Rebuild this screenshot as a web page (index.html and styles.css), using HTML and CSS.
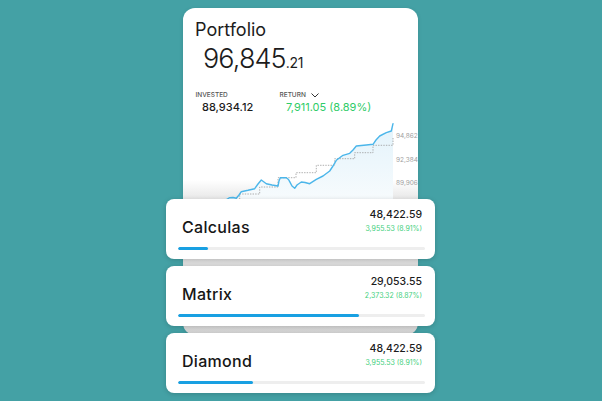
FILE: index.html
```html
<!DOCTYPE html>
<html>
<head>
<meta charset="utf-8">
<link rel="stylesheet" href="styles.css">
</head>
<body>
<div class="stage">
  <div class="phone">
    <div class="title">Portfolio</div>
    <div class="total">96,845<span class="cents">.21</span></div>
    <div class="stats">
      <div class="stat stat-invested">
        <div class="label">INVESTED</div>
        <div class="value">88,934.12</div>
      </div>
      <div class="stat">
        <div class="label">RETURN <svg class="chev" width="8" height="5" viewBox="0 0 8 5"><polyline points="0.5,0.5 4,4 7.5,0.5" fill="none" stroke="#333" stroke-width="1"/></svg></div>
        <div class="value gain">7,911.05 (8.89%)</div>
      </div>
    </div>
    <svg class="chart" width="235" height="86" viewBox="183 114 235 86">
      <defs>
        <linearGradient id="fillg" x1="0" y1="0" x2="0" y2="1">
          <stop offset="0" stop-color="#e3f3fb"/>
          <stop offset="1" stop-color="#f7fbfd"/>
        </linearGradient>
      </defs>
      <polygon fill="url(#fillg)" points="225.7,199 229.7,196.7 236.3,197.3 241.3,190.7 248,189.3 254.7,187.7 258,183 261.3,179 266.3,182.7 272,184 278,185 280.3,176.7 286.3,176.7 289.7,180.7 294.7,187.3 301.3,181 309.7,182.7 316.3,178.3 323,175 329.7,170 336.3,159.3 343,154.3 349.7,152.3 356.3,145 366.3,144 373,143.3 379.7,135 386.3,131.7 391.3,130 393,122.7 393,200 225.7,200"/>
      <polyline fill="none" stroke="#9a9a9a" stroke-width="0.8" stroke-dasharray="1.4 1.2" points="239.7,198.3 239.7,193 259.7,193 259.7,186 278,186 278,176.7 296,176.7 296,171.7 316.3,171.7 316.3,164.3 334.7,164.3 334.7,157.7 354.7,157.7 354.7,151.7 373,151.7 373,144.3 393,144.3 393,136.7"/>
      <polyline fill="none" stroke="#4bb6ea" stroke-width="1.4" stroke-linejoin="round" stroke-linecap="round" points="225.7,199 229.7,196.7 233,196.5 236.3,197.3 239,194 241.3,190.7 248,189.3 254.7,187.7 258,183 261.3,179 264,181 266.3,182.7 272,184 278,185 279,180 280.3,176.7 286.3,176.7 288.5,178.5 289.7,180.7 292,185 294.7,187.3 297,184 301.3,181 305,181.5 309.7,182.7 316.3,178.3 323,175 329.7,170 333,165 336.3,159.3 343,154.3 349.7,152.3 353,149 356.3,145 366.3,144 373,143.3 376,139 379.7,135 386.3,131.7 391.3,130 393,122.7"/>
      <text x="396" y="137" class="axis">94,862</text>
      <text x="396" y="160.5" class="axis">92,384</text>
      <text x="396" y="184" class="axis">89,906</text>
    </svg>
  </div>
  <div class="cards">
    <div class="card">
      <div class="card-top">
        <div class="name">Calculas</div>
        <div class="amounts">
          <div class="amount">48,422.59</div>
          <div class="change">3,955.53 (8.91%)</div>
        </div>
      </div>
      <div class="bar"><div class="fill" style="width: 12%"></div></div>
    </div>
    <div class="card">
      <div class="card-top">
        <div class="name">Matrix</div>
        <div class="amounts">
          <div class="amount">29,053.55</div>
          <div class="change">2,373.32 (8.87%)</div>
        </div>
      </div>
      <div class="bar"><div class="fill" style="width: 73.4%"></div></div>
    </div>
    <div class="card">
      <div class="card-top">
        <div class="name">Diamond</div>
        <div class="amounts">
          <div class="amount">48,422.59</div>
          <div class="change">3,955.53 (8.91%)</div>
        </div>
      </div>
      <div class="bar"><div class="fill" style="width: 30.2%"></div></div>
    </div>
  </div>
</div>
</body>
</html>
```

FILE: styles.css
```css
html, body {
  margin: 0;
  padding: 0;
}
body {
  background: #44a1a5;
  font-family: Inter, "Noto Sans", "DejaVu Sans", sans-serif;
  color: #1a1a1a;
}
.stage {
  width: 602px;
  height: 401px;
  overflow: hidden;
  padding-top: 8px;
  box-sizing: border-box;
}
.phone {
  margin-left: 183px;
  width: 235px;
  height: 327px;
  box-sizing: border-box;
  padding-top: 11px;
  border-radius: 12px;
  background: linear-gradient(to bottom, #ffffff 0, #ffffff 172px, #e9e9e9 190px, #dcdcdc 260px, #d6d6d6 327px);
  box-shadow: 0 1px 4px rgba(0,0,0,0.12);
}
.title {
  font-size: 18px;
  line-height: 22px;
  font-weight: 400;
  padding-left: 12px;
  color: #1c1c1c;
}
.total {
  margin-top: 2px;
  padding-left: 20px;
  font-size: 27px;
  line-height: 32px;
  font-weight: 300;
  color: #1c1c1c;
  letter-spacing: -0.9px;
}
.cents {
  font-size: 14px;
  font-weight: 400;
  letter-spacing: -0.2px;
}
.stats {
  display: flex;
  margin-top: 12px;
  padding-left: 12.5px;
}
.stat-invested {
  width: 84px;
}
.label {
  font-size: 6.5px;
  line-height: 8px;
  color: #555;
  font-weight: 500;
  display: flex;
  align-items: center;
  gap: 3px;
}
.chev {
  display: block;
  margin-left: 2px;
}
.value {
  margin-top: 2.3px;
  padding-left: 6.5px;
  font-size: 11px;
  line-height: 13px;
  font-weight: 500;
  color: #1c1c1c;
}
.value.gain {
  color: #2fcc68;
  font-weight: 400;
}
.chart {
  display: block;
  margin-top: 0.7px;
}
.axis {
  font-family: Inter, "Noto Sans", sans-serif;
  font-size: 6.5px;
  fill: #a0a0a0;
}
.cards {
  margin-top: -136px;
  margin-left: 166px;
  width: 269px;
  display: flex;
  flex-direction: column;
  gap: 7px;
}
.card {
  height: 60px;
  box-sizing: border-box;
  background: #fff;
  border-radius: 8px;
  padding: 10px 10px 0 12px;
  box-shadow: 0 1px 5px rgba(0,0,0,0.18);
}
.card-top {
  display: flex;
  justify-content: space-between;
  align-items: flex-start;
  height: 36px;
}
.name {
  margin-top: 8px;
  margin-left: 4px;
  font-size: 16px;
  line-height: 20px;
  font-weight: 500;
  color: #161616;
  letter-spacing: 0.3px;
}
.amounts {
  margin-right: 3px;
  text-align: right;
}
.amount {
  font-size: 10.5px;
  line-height: 12px;
  font-weight: 500;
  color: #1c1c1c;
}
.change {
  margin-top: 2px;
  font-size: 7px;
  line-height: 12px;
  color: #3fcf7d;
}
.bar {
  margin-top: 2px;
  height: 2.5px;
  background: #eeeeee;
  border-radius: 2px;
  overflow: hidden;
}
.fill {
  height: 100%;
  background: #18a0e2;
  border-radius: 2px;
}
```
